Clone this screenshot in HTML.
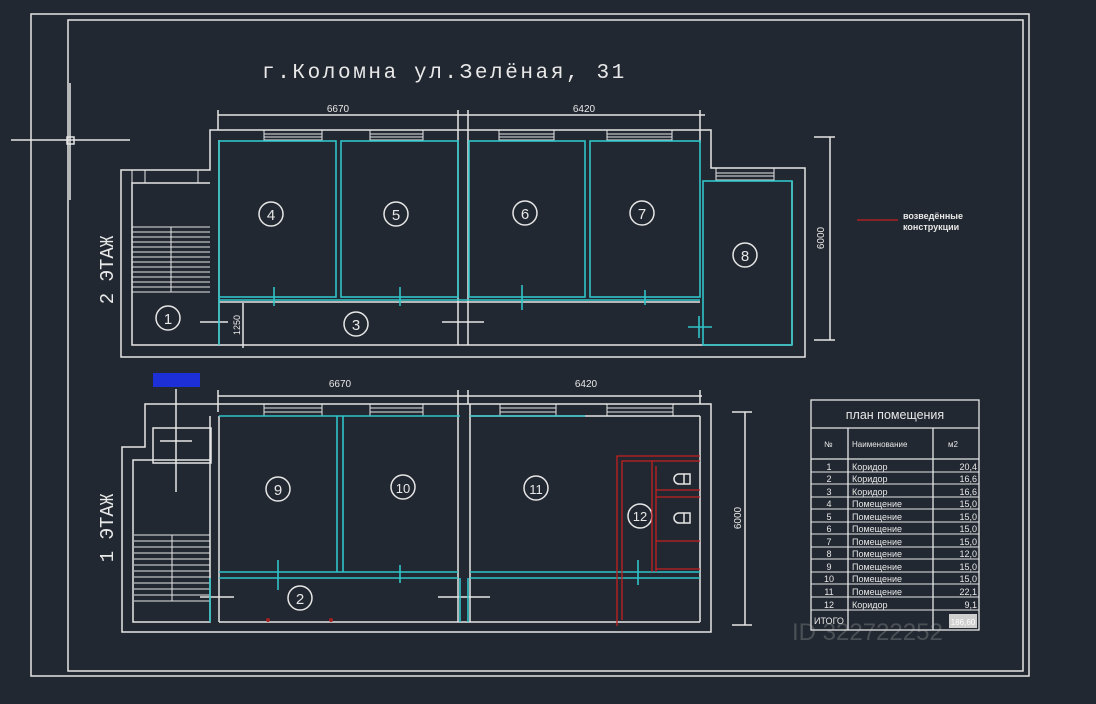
<!DOCTYPE html>
<html><head><meta charset="utf-8"><style>
html,body{margin:0;padding:0;background:#222831;}
svg{display:block}
text{font-family:"Liberation Sans","DejaVu Sans",sans-serif;fill:#e8e8e8}
</style></head><body>
<svg width="1096" height="704" viewBox="0 0 1096 704" xmlns="http://www.w3.org/2000/svg">
<rect width="1096" height="704" fill="#222831"/>
<g fill="none" stroke="#e6e6e6" stroke-width="1.5">
<rect x="31" y="14" width="998" height="662"/>
<rect x="68" y="20" width="955" height="651"/>
<line x1="11" y1="140" x2="130" y2="140"/>
<line x1="70" y1="83" x2="70" y2="200"/>
<rect x="67" y="137" width="7" height="7"/>

<path d="M210,130 H711 V168 H805 V357 H121 V170 H210 Z"/>
<path d="M219,140 V345 H132 V183 H210"/>
<line x1="219" y1="345" x2="792" y2="345"/>
<line x1="792" y1="345" x2="792" y2="181"/>
<g stroke-width="1">
<line x1="132" y1="227" x2="210" y2="227"/><line x1="132" y1="232" x2="210" y2="232"/>
<line x1="132" y1="237" x2="210" y2="237"/><line x1="132" y1="242" x2="210" y2="242"/>
<line x1="132" y1="247" x2="210" y2="247"/><line x1="132" y1="252" x2="210" y2="252"/>
<line x1="132" y1="257" x2="210" y2="257"/><line x1="132" y1="262" x2="210" y2="262"/>
<line x1="132" y1="267" x2="210" y2="267"/><line x1="132" y1="272" x2="210" y2="272"/>
<line x1="132" y1="277" x2="210" y2="277"/><line x1="132" y1="282" x2="210" y2="282"/>
<line x1="132" y1="287" x2="210" y2="287"/><line x1="132" y1="292" x2="210" y2="292"/>
<line x1="171" y1="227" x2="171" y2="292"/>
<line x1="132" y1="170" x2="132" y2="183"/><line x1="145" y1="170" x2="145" y2="183"/><line x1="198" y1="170" x2="198" y2="183"/>
<rect x="264" y="130" width="58" height="10"/><line x1="264" y1="134" x2="322" y2="134"/><line x1="264" y1="137" x2="322" y2="137"/>
<rect x="370" y="130" width="53" height="10"/><line x1="370" y1="134" x2="423" y2="134"/><line x1="370" y1="137" x2="423" y2="137"/>
<rect x="499" y="130" width="55" height="10"/><line x1="499" y1="134" x2="554" y2="134"/><line x1="499" y1="137" x2="554" y2="137"/>
<rect x="607" y="130" width="65" height="10"/><line x1="607" y1="134" x2="672" y2="134"/><line x1="607" y1="137" x2="672" y2="137"/>
<rect x="716" y="168" width="58" height="12"/><line x1="716" y1="173" x2="774" y2="173"/><line x1="716" y1="176" x2="774" y2="176"/>
</g>
<line x1="458" y1="130" x2="458" y2="345"/><line x1="468" y1="130" x2="468" y2="345"/>
<line x1="219" y1="302" x2="700" y2="302"/>
<line x1="218" y1="115" x2="705" y2="115"/>
<line x1="218" y1="110" x2="218" y2="130"/><line x1="458" y1="110" x2="458" y2="130"/><line x1="468" y1="110" x2="468" y2="130"/><line x1="700" y1="110" x2="700" y2="143"/>
<line x1="830" y1="137" x2="830" y2="340"/><line x1="814" y1="137" x2="835" y2="137"/><line x1="814" y1="340" x2="835" y2="340"/>
<line x1="243" y1="303" x2="243" y2="348"/>
<line x1="200" y1="322" x2="228" y2="322"/><line x1="442" y1="322" x2="484" y2="322"/>
<circle cx="271" cy="214" r="12"/><circle cx="396" cy="214" r="12"/><circle cx="525" cy="213" r="12"/><circle cx="642" cy="213" r="12"/><circle cx="745" cy="255" r="12"/><circle cx="168" cy="318" r="12"/><circle cx="356" cy="324" r="12"/>

<path d="M145,404 H711 V632 H122 V447 H145 Z"/>
<path d="M210,416 V622 H133 V460 H210"/>
<line x1="219" y1="416" x2="219" y2="622"/>
<line x1="219" y1="622" x2="700" y2="622"/><line x1="700" y1="622" x2="700" y2="416"/><line x1="470" y1="416" x2="700" y2="416"/>
<line x1="458" y1="404" x2="458" y2="622"/><line x1="470" y1="404" x2="470" y2="622"/>
<rect x="153" y="428" width="58" height="35"/>
<g stroke-width="1">
<rect x="264" y="404" width="58" height="12"/><line x1="264" y1="408" x2="322" y2="408"/><line x1="264" y1="412" x2="322" y2="412"/>
<rect x="370" y="404" width="53" height="12"/><line x1="370" y1="408" x2="423" y2="408"/><line x1="370" y1="412" x2="423" y2="412"/>
<rect x="500" y="404" width="56" height="12"/><line x1="500" y1="408" x2="556" y2="408"/><line x1="500" y1="412" x2="556" y2="412"/>
<rect x="607" y="404" width="66" height="12"/><line x1="607" y1="408" x2="673" y2="408"/><line x1="607" y1="412" x2="673" y2="412"/>
<line x1="134" y1="535" x2="210" y2="535"/><line x1="134" y1="541" x2="210" y2="541"/><line x1="134" y1="547" x2="210" y2="547"/><line x1="134" y1="553" x2="210" y2="553"/><line x1="134" y1="559" x2="210" y2="559"/><line x1="134" y1="565" x2="210" y2="565"/><line x1="134" y1="571" x2="210" y2="571"/><line x1="134" y1="577" x2="210" y2="577"/><line x1="134" y1="583" x2="210" y2="583"/><line x1="134" y1="589" x2="210" y2="589"/><line x1="134" y1="595" x2="210" y2="595"/><line x1="134" y1="601" x2="210" y2="601"/><line x1="172" y1="535" x2="172" y2="601"/>
</g>
<line x1="176" y1="389" x2="176" y2="492"/><line x1="160" y1="441" x2="192" y2="441"/>
<line x1="218" y1="396" x2="702" y2="396"/>
<line x1="218" y1="390" x2="218" y2="412"/><line x1="458" y1="390" x2="458" y2="404"/><line x1="468" y1="390" x2="468" y2="404"/><line x1="700" y1="390" x2="700" y2="404"/>
<line x1="745" y1="412" x2="745" y2="625"/><line x1="732" y1="412" x2="752" y2="412"/><line x1="732" y1="625" x2="752" y2="625"/>
<line x1="200" y1="597" x2="234" y2="597"/><line x1="438" y1="597" x2="490" y2="597"/>
<circle cx="278" cy="489" r="12"/><circle cx="403" cy="487" r="12"/><circle cx="536" cy="488" r="12"/><circle cx="640" cy="516" r="12"/><circle cx="300" cy="598" r="12"/>
<path d="M684,474 h-5 a5,5 0 0 0 0,10 h5 M690,474 v10 h-6 v-10 Z" stroke-width="1.5"/>
<path d="M684,513 h-5 a5,5 0 0 0 0,10 h5 M690,513 v10 h-6 v-10 Z" stroke-width="1.5"/>
</g>

<g fill="none" stroke="#2fc4c8" stroke-width="1.6">
<rect x="219" y="141" width="117" height="156"/>
<rect x="341" y="141" width="117" height="156"/>
<rect x="469" y="141" width="116" height="156"/>
<rect x="590" y="141" width="110" height="156"/>
<line x1="219" y1="300" x2="700" y2="300"/><line x1="219" y1="297" x2="219" y2="345"/>
<rect x="703" y="181" width="89" height="164"/>
<line x1="274" y1="287" x2="274" y2="306"/><line x1="400" y1="287" x2="400" y2="306"/><line x1="522" y1="285" x2="522" y2="310"/><line x1="645" y1="290" x2="645" y2="305"/><line x1="699" y1="316" x2="699" y2="338"/><line x1="688" y1="327" x2="712" y2="327"/>
<line x1="219" y1="416" x2="460" y2="416"/><line x1="470" y1="416" x2="585" y2="416"/>
<line x1="337" y1="416" x2="337" y2="572"/><line x1="343" y1="416" x2="343" y2="572"/>
<line x1="219" y1="572" x2="458" y2="572"/><line x1="219" y1="578" x2="458" y2="578"/>
<line x1="470" y1="572" x2="700" y2="572"/><line x1="470" y1="578" x2="700" y2="578"/>
<line x1="278" y1="560" x2="278" y2="590"/><line x1="400" y1="565" x2="400" y2="583"/><line x1="638" y1="560" x2="638" y2="585"/>
<line x1="460" y1="578" x2="460" y2="622"/><line x1="468" y1="578" x2="468" y2="622"/>
<line x1="210" y1="578" x2="210" y2="622"/>
</g>
<g fill="none" stroke="#c42020" stroke-width="1.3">
<path d="M617,626 V456 H700 M622,620 V461 H700"/>
<path d="M652,461 V572 M656,466 V572 M656,490 H700 M656,497 H700 M656,541 H700 M656,569 H700"/>
<line x1="857" y1="220" x2="898" y2="220"/>
</g>
<circle cx="268" cy="620" r="2" fill="#a02020"/><circle cx="331" cy="620" r="2" fill="#a02020"/>
<rect x="153" y="373" width="47" height="14" fill="#1d30d8"/>

<text x="262" y="78" font-size="21" letter-spacing="2.6" style="font-family:'Liberation Mono',monospace">г.Коломна ул.Зелёная, 31</text>
<g font-size="10" text-anchor="middle"><text x="338" y="112">6670</text><text x="584" y="112">6420</text><text x="340" y="387">6670</text><text x="586" y="387">6420</text></g>
<text font-size="10" transform="translate(824,238) rotate(-90)" text-anchor="middle">6000</text>
<text font-size="10" transform="translate(741,518) rotate(-90)" text-anchor="middle">6000</text>
<text font-size="9" transform="translate(240,325) rotate(-90)" text-anchor="middle">1250</text>
<text font-size="19" transform="translate(113,270) rotate(-90)" text-anchor="middle" style="font-family:'Liberation Mono',monospace">2 ЭТАЖ</text>
<text font-size="19" transform="translate(113,528) rotate(-90)" text-anchor="middle" style="font-family:'Liberation Mono',monospace">1 ЭТАЖ</text>
<g font-size="15" text-anchor="middle"><text x="271" y="220">4</text><text x="396" y="220">5</text><text x="525" y="219">6</text><text x="642" y="219">7</text><text x="745" y="261">8</text><text x="168" y="324">1</text><text x="356" y="330">3</text>
<text x="278" y="495">9</text><text x="403" y="493" font-size="13">10</text><text x="536" y="494" font-size="13">11</text><text x="640" y="521" font-size="13">12</text><text x="300" y="604">2</text></g>
<text x="903" y="219" font-size="9" font-weight="bold">возведённые</text>
<text x="903" y="230" font-size="9" font-weight="bold">конструкции</text>

<g fill="none" stroke="#e6e6e6" stroke-width="1.3">
<rect x="811" y="400" width="168" height="230"/>
<line x1="811" y1="428" x2="979" y2="428"/>
<line x1="811" y1="459" x2="979" y2="459"/>
<line x1="848" y1="428" x2="848" y2="630"/><line x1="933" y1="428" x2="933" y2="630"/>
</g>
<g stroke="#e6e6e6" stroke-width="1">
<line x1="811" y1="472" x2="979" y2="472"/><line x1="811" y1="484" x2="979" y2="484"/><line x1="811" y1="497" x2="979" y2="497"/><line x1="811" y1="509" x2="979" y2="509"/><line x1="811" y1="522" x2="979" y2="522"/><line x1="811" y1="534" x2="979" y2="534"/><line x1="811" y1="547" x2="979" y2="547"/><line x1="811" y1="559" x2="979" y2="559"/><line x1="811" y1="572" x2="979" y2="572"/><line x1="811" y1="584" x2="979" y2="584"/><line x1="811" y1="597" x2="979" y2="597"/><line x1="811" y1="610" x2="979" y2="610"/>
</g>
<text x="895" y="419" font-size="12.5" text-anchor="middle">план помещения</text>
<g font-size="8"><text x="824" y="447">№</text><text x="852" y="447">Наименование</text><text x="948" y="447">м2</text></g>
<g font-size="9">
<g text-anchor="middle"><text x="829" y="470">1</text><text x="829" y="482">2</text><text x="829" y="495">3</text><text x="829" y="507">4</text><text x="829" y="520">5</text><text x="829" y="532">6</text><text x="829" y="545">7</text><text x="829" y="557">8</text><text x="829" y="570">9</text><text x="829" y="582">10</text><text x="829" y="595">11</text><text x="829" y="608">12</text></g>
<text x="852" y="470">Коридор</text><text x="852" y="482">Коридор</text><text x="852" y="495">Коридор</text><text x="852" y="507">Помещение</text><text x="852" y="520">Помещение</text><text x="852" y="532">Помещение</text><text x="852" y="545">Помещение</text><text x="852" y="557">Помещение</text><text x="852" y="570">Помещение</text><text x="852" y="582">Помещение</text><text x="852" y="595">Помещение</text><text x="852" y="608">Коридор</text>
<g text-anchor="end"><text x="977" y="470">20,4</text><text x="977" y="482">16,6</text><text x="977" y="495">16,6</text><text x="977" y="507">15,0</text><text x="977" y="520">15,0</text><text x="977" y="532">15,0</text><text x="977" y="545">15,0</text><text x="977" y="557">12,0</text><text x="977" y="570">15,0</text><text x="977" y="582">15,0</text><text x="977" y="595">22,1</text><text x="977" y="608">9,1</text></g>
<text x="814" y="624">ИТОГО</text>
</g>
<rect x="949" y="614" width="28" height="14" fill="#cfcfcf"/>
<text x="963" y="625" font-size="8" text-anchor="middle" style="fill:#fff">186,60</text>
<text x="792" y="640" font-size="24" style="fill:rgba(200,200,200,0.25)">ID 322722252</text>
</svg>
</body></html>
